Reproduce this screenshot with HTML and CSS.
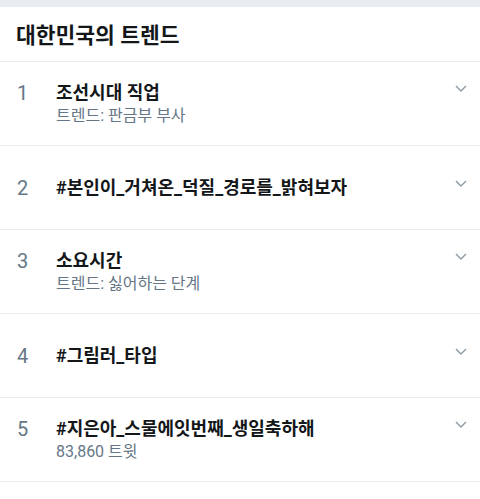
FILE: index.html
```html
<!DOCTYPE html>
<html lang="ko">
	<head>
		<meta charset="UTF-8" />
		<meta name="viewport" content="width=device-width, initial-scale=1.0" />
		<title>대한민국의 트렌드</title>
		<link rel="stylesheet" href="styles.css">
	</head>
	<body>
		<div class="top-strip"></div>
		<h1 class="heading">대한민국의 트렌드</h1>

		<ul class="trends">
			<li class="trend">
				<span class="rank">1</span>
				<span class="name">조선시대 직업</span>
				<svg class="chev" viewBox="0 0 12 7"><path d="M1 1l5 5 5-5" /></svg>
				<span class="meta">트렌드: 판금부 부사</span>
			</li>
			<li class="trend">
				<span class="rank">2</span>
				<span class="name">#본인이_거쳐온_덕질_경로를_밝혀보자</span>
				<svg class="chev" viewBox="0 0 12 7"><path d="M1 1l5 5 5-5" /></svg>
			</li>
			<li class="trend">
				<span class="rank">3</span>
				<span class="name">소요시간</span>
				<svg class="chev" viewBox="0 0 12 7"><path d="M1 1l5 5 5-5" /></svg>
				<span class="meta">트렌드: 싫어하는 단계</span>
			</li>
			<li class="trend">
				<span class="rank">4</span>
				<span class="name">#그림러_타입</span>
				<svg class="chev" viewBox="0 0 12 7"><path d="M1 1l5 5 5-5" /></svg>
			</li>
			<li class="trend">
				<span class="rank">5</span>
				<span class="name">#지은아_스물에잇번째_생일축하해</span>
				<svg class="chev" viewBox="0 0 12 7"><path d="M1 1l5 5 5-5" /></svg>
				<span class="meta">83,860 트윗</span>
			</li>
		</ul>
	</body>
</html>
```

FILE: styles.css
```css
* {
	margin: 0;
	padding: 0;
	box-sizing: border-box;
}

body {
	background-color: #fff;
	font-family: Roboto, "Noto Sans CJK KR", sans-serif;
	color: #14171a;
	width: 480px;
	overflow: hidden;
}

.top-strip {
	height: 7px;
	background-color: #e6ecf0;
}

.heading {
	height: 55px;
	display: flex;
	align-items: center;
	padding: 0 16px 2px;
	font-size: 21.5px;
	font-weight: 700;
	border-bottom: 1px solid #e6ecf0;
}

.trends {
	list-style: none;
}

.trend {
	height: 84px;
	display: grid;
	grid-template-columns: 40px 1fr 25px;
	align-content: center;
	padding: 0 0 0 16px;
	border-bottom: 1px solid #e6ecf0;
}

.rank {
	grid-column: 1;
	grid-row: 1;
	font-size: 20px;
	line-height: 24px;
	color: #657786;
	padding-left: 1px;
}

.name {
	grid-column: 2;
	grid-row: 1;
	font-size: 18px;
	font-weight: 700;
	line-height: 24px;
	white-space: nowrap;
}

.meta {
	grid-column: 2;
	grid-row: 2;
	font-size: 16px;
	line-height: 22px;
	color: #657786;
}

.chev {
	grid-column: 3;
	grid-row: 1;
	width: 12px;
	height: 7px;
	margin-top: 4px;
	justify-self: start;
	fill: none;
	stroke: #8899a6;
	stroke-width: 1.4;
}
```
